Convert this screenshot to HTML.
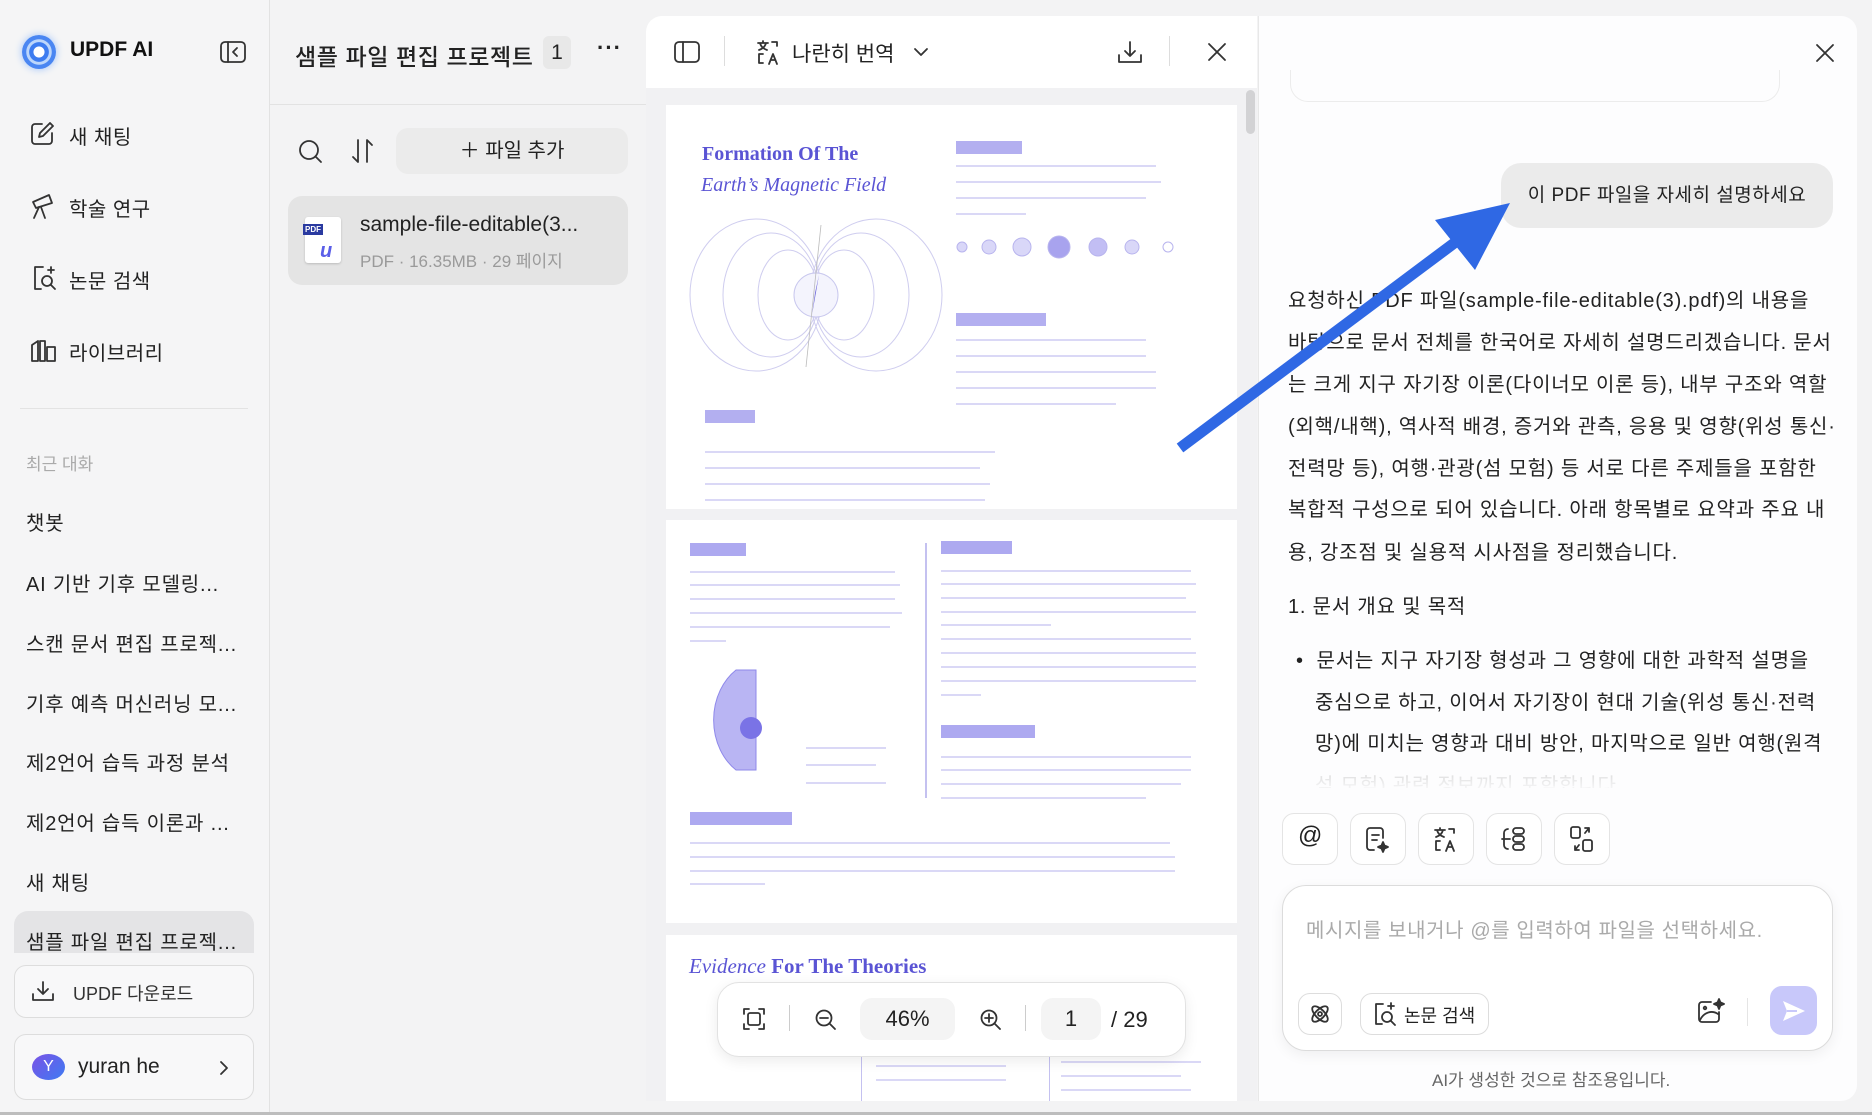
<!DOCTYPE html>
<html><head><meta charset="utf-8"><style>
*{box-sizing:border-box;margin:0;padding:0}
body{width:1872px;height:1115px;overflow:hidden;background:#f3f3f4;font-family:"Liberation Sans","Noto Sans CJK KR",sans-serif;color:#222;position:relative}
.a{position:absolute}
.ic{position:absolute;fill:none;stroke:#333;stroke-width:1.8;stroke-linecap:round;stroke-linejoin:round}
.menu{position:absolute;left:69px;font-size:20px;color:#222;letter-spacing:0.5px}
.rec{position:absolute;left:26px;font-size:20px;color:#222;white-space:nowrap;letter-spacing:0.8px}
.ans{position:absolute;left:1288px;font-size:20px;color:#222;white-space:nowrap;letter-spacing:0.8px}
.tb{position:absolute;top:813px;width:56px;height:52px;border:1px solid #e4e4e4;border-radius:12px;background:#fff}
</style></head><body>

<!-- left sidebar -->
<div class="a" style="left:0;top:0;width:270px;height:1115px;background:#f5f5f6;border-right:1px solid #e2e2e2"></div>
<div class="a" style="left:22px;top:35px;width:34px;height:34px;border-radius:50%;background:radial-gradient(circle at 50% 50%,#fff 0 22%,#3d7cf0 24% 40%,#bcd6fb 42% 52%,#4a86f2 54%);box-shadow:0 0 8px #9cc1fa"></div>
<div class="a" style="left:70px;top:38px;font-size:21px;font-weight:bold;color:#111">UPDF AI</div>
<svg class="ic" style="left:220px;top:41px" width="26" height="22"><rect x="1" y="1" width="24" height="20" rx="4"/><line x1="8" y1="1" x2="8" y2="21"/><path d="M17 7l-4 4 4 4"/></svg>

<svg class="ic" style="left:30px;top:121px" width="26" height="26"><path d="M12 3H5a3 3 0 0 0-3 3v14a3 3 0 0 0 3 3h14a3 3 0 0 0 3-3v-8"/><path d="M20 2l3 3-10 10-4 1 1-4z"/></svg>
<div class="menu" style="top:121px">새 채팅</div>
<svg class="ic" style="left:30px;top:192px" width="28" height="28"><path d="M3 10l16-7 3 8-16 5z"/><path d="M9 15l-5 11M11 15l4 11"/></svg>
<div class="menu" style="top:193px">학술 연구</div>
<svg class="ic" style="left:31px;top:264px" width="28" height="28"><path d="M12 3H4v22h6"/><circle cx="16" cy="17" r="5"/><path d="M20 21l4 4M20 3v6M17 6h6"/></svg>
<div class="menu" style="top:265px">논문 검색</div>
<svg class="ic" style="left:30px;top:337px" width="28" height="26"><path d="M2 24V8l6-4v20zM10 24V4h5v20zM17 24V10h8v14z"/></svg>
<div class="menu" style="top:337px">라이브러리</div>
<div class="a" style="left:20px;top:408px;width:228px;height:1px;background:#e3e3e3"></div>
<div class="a" style="left:26px;top:450px;font-size:17px;color:#aaa">최근 대화</div>
<div class="rec" style="top:507px">챗봇</div>
<div class="rec" style="top:568px">AI 기반 기후 모델링...</div>
<div class="rec" style="top:628px">스캔 문서 편집 프로젝...</div>
<div class="rec" style="top:688px">기후 예측 머신러닝 모...</div>
<div class="rec" style="top:747px">제2언어 습득 과정 분석</div>
<div class="rec" style="top:807px">제2언어 습득 이론과 ...</div>
<div class="rec" style="top:867px">새 채팅</div>
<div class="a" style="left:14px;top:911px;width:240px;height:42px;background:#e4e4e6;border-radius:14px 14px 0 0;overflow:hidden"><div style="position:absolute;left:12px;top:15px;font-size:20px;white-space:nowrap;letter-spacing:0.8px">샘플 파일 편집 프로젝...</div></div>
<div class="a" style="left:0;top:953px;width:269px;height:162px;background:#f5f5f6"></div>
<div class="a" style="left:14px;top:965px;width:240px;height:53px;border:1px solid #ddd;border-radius:12px;background:#f8f8f9"></div>
<svg class="ic" style="left:31px;top:980px" width="24" height="22"><path d="M12 2v12M7 9l5 5 5-5M2 14v6h20v-6"/></svg>
<div class="a" style="left:73px;top:980px;font-size:18px;color:#333">UPDF 다운로드</div>
<div class="a" style="left:14px;top:1034px;width:240px;height:66px;border:1px solid #ddd;border-radius:12px;background:#f8f8f9"></div>
<div class="a" style="left:32px;top:1054px;width:33px;height:26px;border-radius:50%;background:linear-gradient(135deg,#7a52e6,#3d7bf2);color:#fff;font-size:16px;text-align:center;line-height:26px">Y</div>
<div class="a" style="left:78px;top:1055px;font-size:21px;color:#222">yuran he</div>
<svg class="ic" style="left:218px;top:1060px" width="12" height="16"><path d="M3 2l6 6-6 6"/></svg>

<!-- project panel -->
<div class="a" style="left:270px;top:104px;width:376px;height:1px;background:#e2e2e2"></div>
<div class="a" style="left:295px;top:38px;font-size:23px;color:#222;white-space:nowrap;font-weight:500;letter-spacing:0.6px">샘플 파일 편집 프로젝트</div>
<div class="a" style="left:543px;top:36px;width:28px;height:33px;border-radius:6px;background:#e8e8e8;font-size:21px;text-align:center;line-height:33px">1</div>
<div class="a" style="left:597px;top:35px;font-size:22px;font-weight:bold;letter-spacing:1px">···</div>
<svg class="ic" style="left:298px;top:139px" width="26" height="26"><circle cx="11" cy="11" r="9"/><path d="M18 18l5 5"/></svg>
<svg class="ic" style="left:350px;top:137px" width="26" height="28"><path d="M8 3v22M3 20l5 5M17 25V3l5 5"/></svg>
<div class="a" style="left:396px;top:128px;width:232px;height:46px;border-radius:12px;background:#ebebeb;text-align:center;font-size:20px;line-height:46px;color:#222">＋ 파일 추가</div>
<div class="a" style="left:288px;top:196px;width:340px;height:89px;border-radius:14px;background:#e4e4e4"></div>
<div class="a" style="left:305px;top:217px;width:36px;height:46px;background:#fff;border-radius:3px;box-shadow:0 1px 2px #bbb"></div>
<div class="a" style="left:303px;top:224px;width:20px;height:11px;background:#2a3aa0;color:#fff;font-size:8px;line-height:11px;text-align:center;font-weight:bold">PDF</div>
<div class="a" style="left:320px;top:240px;font-size:20px;font-weight:bold;font-style:italic;color:#5a5ee8">u</div>
<div class="a" style="left:360px;top:213px;font-size:21px;color:#222">sample-file-editable(3...</div>
<div class="a" style="left:360px;top:247px;font-size:17px;color:#9a9a9a">PDF · 16.35MB · 29 페이지</div>

<!-- pdf panel -->
<div class="a" style="left:646px;top:16px;width:611px;height:1085px;background:#f1f1f3;border-radius:16px 0 0 0;overflow:hidden">
 <div class="a" style="left:0;top:0;width:611px;height:72px;background:#fff"></div>
</div>
<svg class="ic" style="left:674px;top:41px" width="26" height="22"><rect x="1" y="1" width="24" height="20" rx="4"/><line x1="9" y1="1" x2="9" y2="21"/></svg>
<div class="a" style="left:724px;top:36px;width:1px;height:30px;background:#ddd"></div>
<svg class="ic" style="left:755px;top:38px" width="28" height="28" stroke-width="1.6"><path d="M3 5h10M8 3v2M5 5c1 4 4 6 7 7M11 5c-1 4-4 6-7 7M17 4h5v4M8 16H4v9h4"/><path d="M14 26l4-10 4 10M15.5 22h5"/></svg>
<div class="a" style="left:792px;top:38px;font-size:21px;color:#222">나란히 번역</div>
<svg class="ic" style="left:913px;top:47px" width="16" height="10"><path d="M2 2l6 6 6-6"/></svg>
<svg class="ic" style="left:1117px;top:40px" width="26" height="24"><path d="M13 2v14M8 11l5 5 5-5M2 15v7h22v-7"/></svg>
<div class="a" style="left:1169px;top:36px;width:1px;height:30px;background:#ddd"></div>
<svg class="ic" style="left:1207px;top:42px" width="20" height="20"><path d="M2 2l16 16M18 2L2 18"/></svg>
<div class="a" style="left:1246px;top:90px;width:9px;height:44px;border-radius:5px;background:#d2d2d4"></div>

<!-- page 1 -->
<svg class="a" style="left:666px;top:105px" width="571" height="404">
<rect width="571" height="404" fill="#fff"/>
<g font-family="Liberation Serif,serif" fill="#5a54d4"><text x="36" y="55" font-size="20" font-weight="bold">Formation Of The</text><text x="35" y="86" font-size="20" font-style="italic">Earth’s Magnetic Field</text></g>
<g fill="none" stroke="#cfcdef" stroke-width="1"><ellipse cx="122" cy="190" rx="30" ry="45"/><ellipse cx="178" cy="190" rx="30" ry="45"/><ellipse cx="105" cy="190" rx="48" ry="62"/><ellipse cx="195" cy="190" rx="48" ry="62"/><ellipse cx="90" cy="190" rx="66" ry="76"/><ellipse cx="210" cy="190" rx="66" ry="76"/></g>
<circle cx="150" cy="190" r="22" fill="#f4f4fd" stroke="#c9c8ee"/>
<path d="M153 170l-7 40 3-22z" fill="#6a64d8"/>
<g stroke="#bbb" stroke-width="0.8"><line x1="155" y1="120" x2="140" y2="262"/></g>
<g fill="#b3aff0"><rect x="290" y="36" width="66" height="13"/><rect x="290" y="208" width="90" height="13"/><rect x="39" y="305" width="50" height="13"/></g>
<g fill="#dad8f6"><rect x="290" y="60" width="200" height="2"/><rect x="290" y="76" width="205" height="2"/><rect x="290" y="92" width="190" height="2"/><rect x="290" y="108" width="70" height="2"/>
<rect x="290" y="234" width="190" height="2"/><rect x="290" y="250" width="190" height="2"/><rect x="290" y="266" width="200" height="2"/><rect x="290" y="282" width="200" height="2"/><rect x="290" y="298" width="160" height="2"/>
<rect x="39" y="346" width="290" height="2"/><rect x="39" y="362" width="275" height="2"/><rect x="39" y="378" width="285" height="2"/><rect x="39" y="394" width="280" height="2"/></g>
<g fill="#d9d7f8" stroke="#b8b4ee"><circle cx="296" cy="142" r="5"/><circle cx="323" cy="142" r="7"/><circle cx="356" cy="142" r="9"/><circle cx="393" cy="142" r="11" fill="#a8a3ee"/><circle cx="432" cy="142" r="9" fill="#c2bef4"/><circle cx="466" cy="142" r="7"/><circle cx="502" cy="142" r="5" fill="#fff"/></g>
</svg>
<!-- page 2 -->
<svg class="a" style="left:666px;top:520px" width="571" height="403">
<rect width="571" height="403" fill="#fff"/>
<g fill="#ada9f0"><rect x="24" y="23" width="56" height="13"/><rect x="275" y="21" width="71" height="13"/><rect x="275" y="205" width="94" height="13"/><rect x="24" y="292" width="102" height="13"/></g>
<rect x="259" y="23" width="2" height="255" fill="#c4c1f0"/>
<g fill="#dad8f6"><rect x="24" y="51" width="205" height="2"/><rect x="24" y="64" width="210" height="2"/><rect x="24" y="78" width="205" height="2"/><rect x="24" y="92" width="212" height="2"/><rect x="24" y="106" width="200" height="2"/><rect x="24" y="120" width="36" height="2"/>
<rect x="275" y="50" width="250" height="2"/><rect x="275" y="63" width="255" height="2"/><rect x="275" y="77" width="245" height="2"/><rect x="275" y="91" width="255" height="2"/><rect x="275" y="104" width="110" height="2"/><rect x="275" y="118" width="250" height="2"/><rect x="275" y="132" width="255" height="2"/><rect x="275" y="146" width="255" height="2"/><rect x="275" y="160" width="255" height="2"/><rect x="275" y="174" width="40" height="2"/>
<rect x="275" y="236" width="250" height="2"/><rect x="275" y="249" width="250" height="2"/><rect x="275" y="263" width="240" height="2"/><rect x="275" y="277" width="205" height="2"/>
<rect x="24" y="322" width="480" height="2"/><rect x="24" y="336" width="485" height="2"/><rect x="24" y="350" width="485" height="2"/><rect x="24" y="363" width="75" height="2"/><rect x="140" y="227" width="80" height="2"/><rect x="140" y="244" width="70" height="2"/><rect x="140" y="262" width="80" height="2"/></g>
<path d="M70 150A50 60 0 0 0 70 250L90 250V150z" fill="#b9b5f3" stroke="#8e88ea"/>
<circle cx="85" cy="208" r="11" fill="#7a73e6"/>
</svg>
<!-- page 3 -->
<svg class="a" style="left:666px;top:935px" width="571" height="166">
<rect width="571" height="166" fill="#fff"/>
<text x="23" y="38" font-family="Liberation Serif,serif" font-size="21" fill="#5a54d4"><tspan font-style="italic">Evidence</tspan> <tspan font-weight="bold">For The Theories</tspan></text>
<rect x="195" y="110" width="1" height="56" fill="#c4c1f0"/><rect x="383" y="110" width="1" height="56" fill="#c4c1f0"/>
<g fill="#dad8f6"><rect x="210" y="130" width="130" height="2"/><rect x="210" y="144" width="130" height="2"/><rect x="395" y="126" width="140" height="2"/><rect x="395" y="140" width="120" height="2"/><rect x="395" y="154" width="130" height="2"/></g>
</svg>
<!-- zoom toolbar -->
<div class="a" style="left:717px;top:982px;width:469px;height:75px;background:#fff;border:1px solid #e2e2e2;border-radius:22px;box-shadow:0 4px 14px rgba(0,0,0,.08)"></div>
<svg class="ic" style="left:743px;top:1008px" width="22" height="22"><path d="M1 6V1h5M16 1h5v5M21 16v5h-5M6 21H1v-5"/><rect x="5" y="5" width="12" height="12" rx="2"/></svg>
<div class="a" style="left:789px;top:1005px;width:1px;height:26px;background:#ccc"></div>
<svg class="ic" style="left:815px;top:1009px" width="22" height="22"><circle cx="9" cy="9" r="7.5"/><path d="M5 9h8M15 15l5 5"/></svg>
<div class="a" style="left:860px;top:998px;width:95px;height:42px;border-radius:12px;background:#f4f4f4;font-size:22px;text-align:center;line-height:42px">46%</div>
<svg class="ic" style="left:980px;top:1009px" width="22" height="22"><circle cx="9" cy="9" r="7.5"/><path d="M5 9h8M9 5v8M15 15l5 5"/></svg>
<div class="a" style="left:1025px;top:1005px;width:1px;height:26px;background:#ccc"></div>
<div class="a" style="left:1041px;top:998px;width:60px;height:42px;border-radius:12px;background:#f4f4f4;font-size:22px;text-align:center;line-height:42px">1</div>
<div class="a" style="left:1111px;top:1007px;font-size:22px">/ 29</div>

<!-- chat panel -->
<div class="a" style="left:1258px;top:16px;width:599px;height:1085px;background:#fdfdfe;border-radius:0 16px 16px 0;border-left:1px solid #e8e8e8"></div>
<svg class="ic" style="left:1815px;top:43px" width="20" height="20"><path d="M2 2l16 16M18 2L2 18"/></svg>
<div class="a" style="left:1290px;top:70px;width:490px;height:32px;border:1px solid #ececec;border-top:none;border-radius:0 0 18px 18px"></div>
<div class="a" style="left:1501px;top:163px;width:332px;height:65px;border-radius:20px;background:#ebebeb;font-size:19px;line-height:65px;text-align:center;color:#222;letter-spacing:0.5px">이 PDF 파일을 자세히 설명하세요</div>
<div class="ans" style="top:284px">요청하신 PDF 파일(sample-file-editable(3).pdf)의 내용을</div>
<div class="ans" style="top:326px">바탕으로 문서 전체를 한국어로 자세히 설명드리겠습니다. 문서</div>
<div class="ans" style="top:368px">는 크게 지구 자기장 이론(다이너모 이론 등), 내부 구조와 역할</div>
<div class="ans" style="top:410px">(외핵/내핵), 역사적 배경, 증거와 관측, 응용 및 영향(위성 통신·</div>
<div class="ans" style="top:452px">전력망 등), 여행·관광(섬 모험) 등 서로 다른 주제들을 포함한</div>
<div class="ans" style="top:493px">복합적 구성으로 되어 있습니다. 아래 항목별로 요약과 주요 내</div>
<div class="ans" style="top:536px">용, 강조점 및 실용적 시사점을 정리했습니다.</div>
<div class="ans" style="top:590px">1. 문서 개요 및 목적</div>
<div class="ans" style="top:644px;left:1296px">•&nbsp; 문서는 지구 자기장 형성과 그 영향에 대한 과학적 설명을</div>
<div class="ans" style="top:686px;left:1315px">중심으로 하고, 이어서 자기장이 현대 기술(위성 통신·전력</div>
<div class="ans" style="top:727px;left:1315px">망)에 미치는 영향과 대비 방안, 마지막으로 일반 여행(원격</div>
<div class="a" style="left:1300px;top:762px;width:540px;height:26px;overflow:hidden"><div style="position:absolute;left:15px;top:7px;font-size:20px;color:#ccc;white-space:nowrap;letter-spacing:0.8px">섬 모험) 관련 정보까지 포함합니다.</div></div>
<div class="a" style="left:1280px;top:768px;width:560px;height:26px;background:linear-gradient(rgba(253,253,254,.2),#fdfdfe)"></div>

<!-- arrow -->
<svg class="a" style="left:1170px;top:190px" width="360" height="270"><line x1="10" y1="258" x2="295" y2="45" stroke="#2f68e4" stroke-width="11"/><polygon points="340,13 265,30 305,80" fill="#2f68e4"/></svg>

<div class="tb" style="left:1282px"></div><div class="tb" style="left:1350px"></div><div class="tb" style="left:1418px"></div><div class="tb" style="left:1486px"></div><div class="tb" style="left:1554px"></div>
<div class="a" style="left:1298px;top:822px;font-size:24px;color:#222">@</div>
<svg class="ic" style="left:1364px;top:826px" width="28" height="28"><path d="M10 24H6a3 3 0 0 1-3-3V5a3 3 0 0 1 3-3h10a3 3 0 0 1 3 3v7M8 9h7M8 14h5"/><path d="M19 16l1.5 3.5L24 21l-3.5 1.5L19 26l-1.5-3.5L14 21l3.5-1.5z" fill="#333"/></svg>
<svg class="ic" style="left:1432px;top:825px" width="28" height="28" stroke-width="1.6"><path d="M3 5h10M8 3v2M5 5c1 4 4 6 7 7M11 5c-1 4-4 6-7 7M17 4h5v4M8 16H4v9h4"/><path d="M14 26l4-10 4 10M15.5 22h5"/></svg>
<svg class="ic" style="left:1500px;top:825px" width="28" height="28"><path d="M8 4a4 4 0 0 0-4 4v12a4 4 0 0 0 4 4M2 14h8"/><rect x="13" y="3" width="11" height="6" rx="3"/><rect x="13" y="11" width="11" height="6" rx="3"/><rect x="13" y="19" width="11" height="6" rx="3"/></svg>
<svg class="ic" style="left:1568px;top:825px" width="28" height="28"><rect x="3" y="2" width="9" height="11" rx="2"/><rect x="15" y="15" width="9" height="11" rx="2"/><path d="M17 3l4 0 0 4M21 3l-4 5M11 25H7v-4M7 25l4-5"/></svg>

<div class="a" style="left:1282px;top:885px;width:551px;height:166px;background:#fff;border:1px solid #dcdcdc;border-radius:24px;box-shadow:0 4px 14px rgba(0,0,0,.06)"></div>
<div class="a" style="left:1306px;top:914px;font-size:20px;color:#aaa;white-space:nowrap;letter-spacing:0.6px">메시지를 보내거나 @를 입력하여 파일을 선택하세요.</div>
<div class="a" style="left:1298px;top:993px;width:44px;height:42px;border:1px solid #ddd;border-radius:12px"></div>
<svg class="ic" style="left:1308px;top:1002px" width="24" height="24"><ellipse cx="12" cy="12" rx="10" ry="4.5" transform="rotate(45 12 12)"/><ellipse cx="12" cy="12" rx="10" ry="4.5" transform="rotate(-45 12 12)"/><circle cx="12" cy="12" r="2"/></svg>
<div class="a" style="left:1360px;top:993px;width:129px;height:42px;border:1px solid #ddd;border-radius:12px"></div>
<svg class="ic" style="left:1373px;top:1001px" width="26" height="26"><path d="M10 3H3v20h6"/><circle cx="14" cy="16" r="5"/><path d="M18 20l4 4M18 2v6M15 5h6"/></svg>
<div class="a" style="left:1404px;top:1002px;font-size:18px;color:#222">논문 검색</div>
<svg class="ic" style="left:1697px;top:998px" width="28" height="26"><path d="M14 4H5a3 3 0 0 0-3 3v14a3 3 0 0 0 3 3h14a3 3 0 0 0 3-3v-7"/><path d="M3 22c4-8 12-10 18-6"/><circle cx="8" cy="10" r="1.3"/><path d="M22 1l1.4 3.3L27 6l-3.6 1.5L22 11l-1.4-3.5L17 6l3.6-1.7z" fill="#333"/></svg>
<div class="a" style="left:1747px;top:998px;width:1px;height:28px;background:#e5e5e5"></div>
<div class="a" style="left:1770px;top:986px;width:47px;height:49px;border-radius:12px;background:#c8c8fa"></div>
<svg class="a" style="left:1781px;top:999px" width="26" height="24"><path d="M2 2l22 10L2 22l4-10z" fill="#fff"/><path d="M6 12h10" stroke="#c8c8fa" stroke-width="2"/></svg>
<div class="a" style="left:1432px;top:1066px;font-size:17px;color:#666">AI가 생성한 것으로 참조용입니다.</div>
<div class="a" style="left:0;top:1112px;width:1872px;height:3px;background:#bdbdbd"></div>
</body></html>
